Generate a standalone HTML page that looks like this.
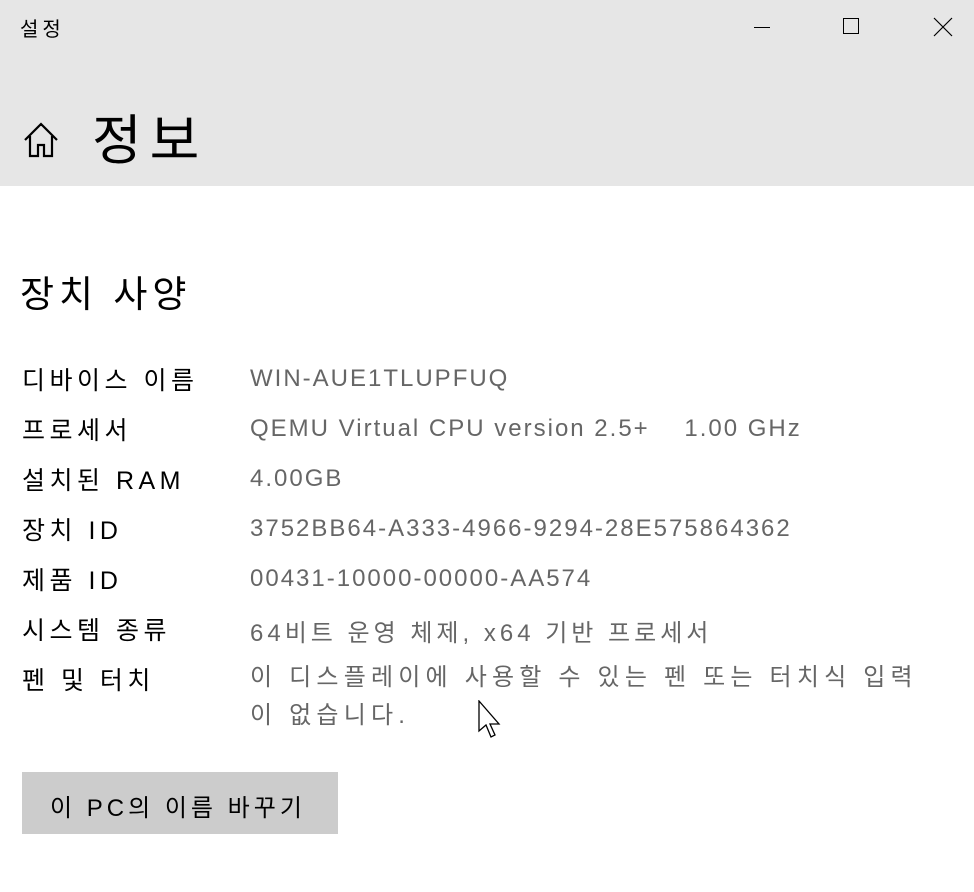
<!DOCTYPE html>
<html><head><meta charset="utf-8"><style>
body{margin:0;width:974px;height:892px;background:#fff;position:relative;overflow:hidden;font-family:"Liberation Sans","Noto Sans CJK KR",sans-serif;}
.hdr{position:absolute;left:0;top:0;width:974px;height:186px;background:#e6e6e6;}
.t{position:absolute;white-space:nowrap;}
.lab{position:absolute;left:22px;font-size:25px;color:#000;white-space:nowrap;letter-spacing:4.5px;}
.val{position:absolute;left:250px;font-size:24px;color:#666;white-space:nowrap;letter-spacing:2px;}
</style></head><body>
<div class="hdr"></div>
<div class="t" style="left:20px;top:13px;font-size:20px;letter-spacing:4px">설정</div>
<div style="position:absolute;left:754px;top:27px;width:16px;height:1px;background:#000"></div>
<div style="position:absolute;left:843px;top:18px;width:16px;height:16px;border:1px solid #000;box-sizing:border-box"></div>
<svg style="position:absolute;left:933px;top:17px" width="20" height="20"><path d="M1 1L19 19M19 1L1 19" stroke="#000" stroke-width="1.2"/></svg>
<svg style="position:absolute;left:22px;top:120px" width="40" height="40" viewBox="0 0 40 40"><path d="M3 20L19 4L35 20M8 16V36H16V25H22V36H30V16" fill="none" stroke="#000" stroke-width="2.2"/></svg>
<div class="t" style="left:92px;top:96px;font-size:54px;letter-spacing:8px">정보</div>
<div class="t" style="left:20px;top:264px;font-size:37px;letter-spacing:5px">장치 사양</div>
<div class="lab" style="top:361px">디바이스 이름</div><div class="val" style="top:365px">WIN-AUE1TLUPFUQ</div>
<div class="lab" style="top:411px">프로세서</div><div class="val" style="top:415px">QEMU Virtual CPU version 2.5+&nbsp;&nbsp;&nbsp; 1.00 GHz</div>
<div class="lab" style="top:461px">설치된 RAM</div><div class="val" style="top:465px">4.00GB</div>
<div class="lab" style="top:511px">장치 ID</div><div class="val" style="top:515px">3752BB64-A333-4966-9294-28E575864362</div>
<div class="lab" style="top:561px">제품 ID</div><div class="val" style="top:565px">00431-10000-00000-AA574</div>
<div class="lab" style="top:611px">시스템 종류</div><div class="val" style="top:613px;letter-spacing:4px">64비트 운영 체제, x64 기반 프로세서</div>
<div class="lab" style="top:661px">펜 및 터치</div><div class="val" style="top:659px;line-height:38px;letter-spacing:5.2px">이 디스플레이에 사용할 수 있는 펜 또는 터치식 입력<br>이 없습니다.</div>
<svg style="position:absolute;left:478px;top:700px" width="26" height="40" viewBox="0 0 26 40"><path d="M1 1V31L8 25L13 37L17 35L12 24H21Z" fill="#fff" stroke="#000" stroke-width="1.3"/></svg>
<div style="position:absolute;left:22px;top:772px;width:316px;height:62px;background:#cccccc"></div>
<div class="t" style="left:50px;top:788px;font-size:24px;letter-spacing:4px">이 PC의 이름 바꾸기</div>
</body></html>
